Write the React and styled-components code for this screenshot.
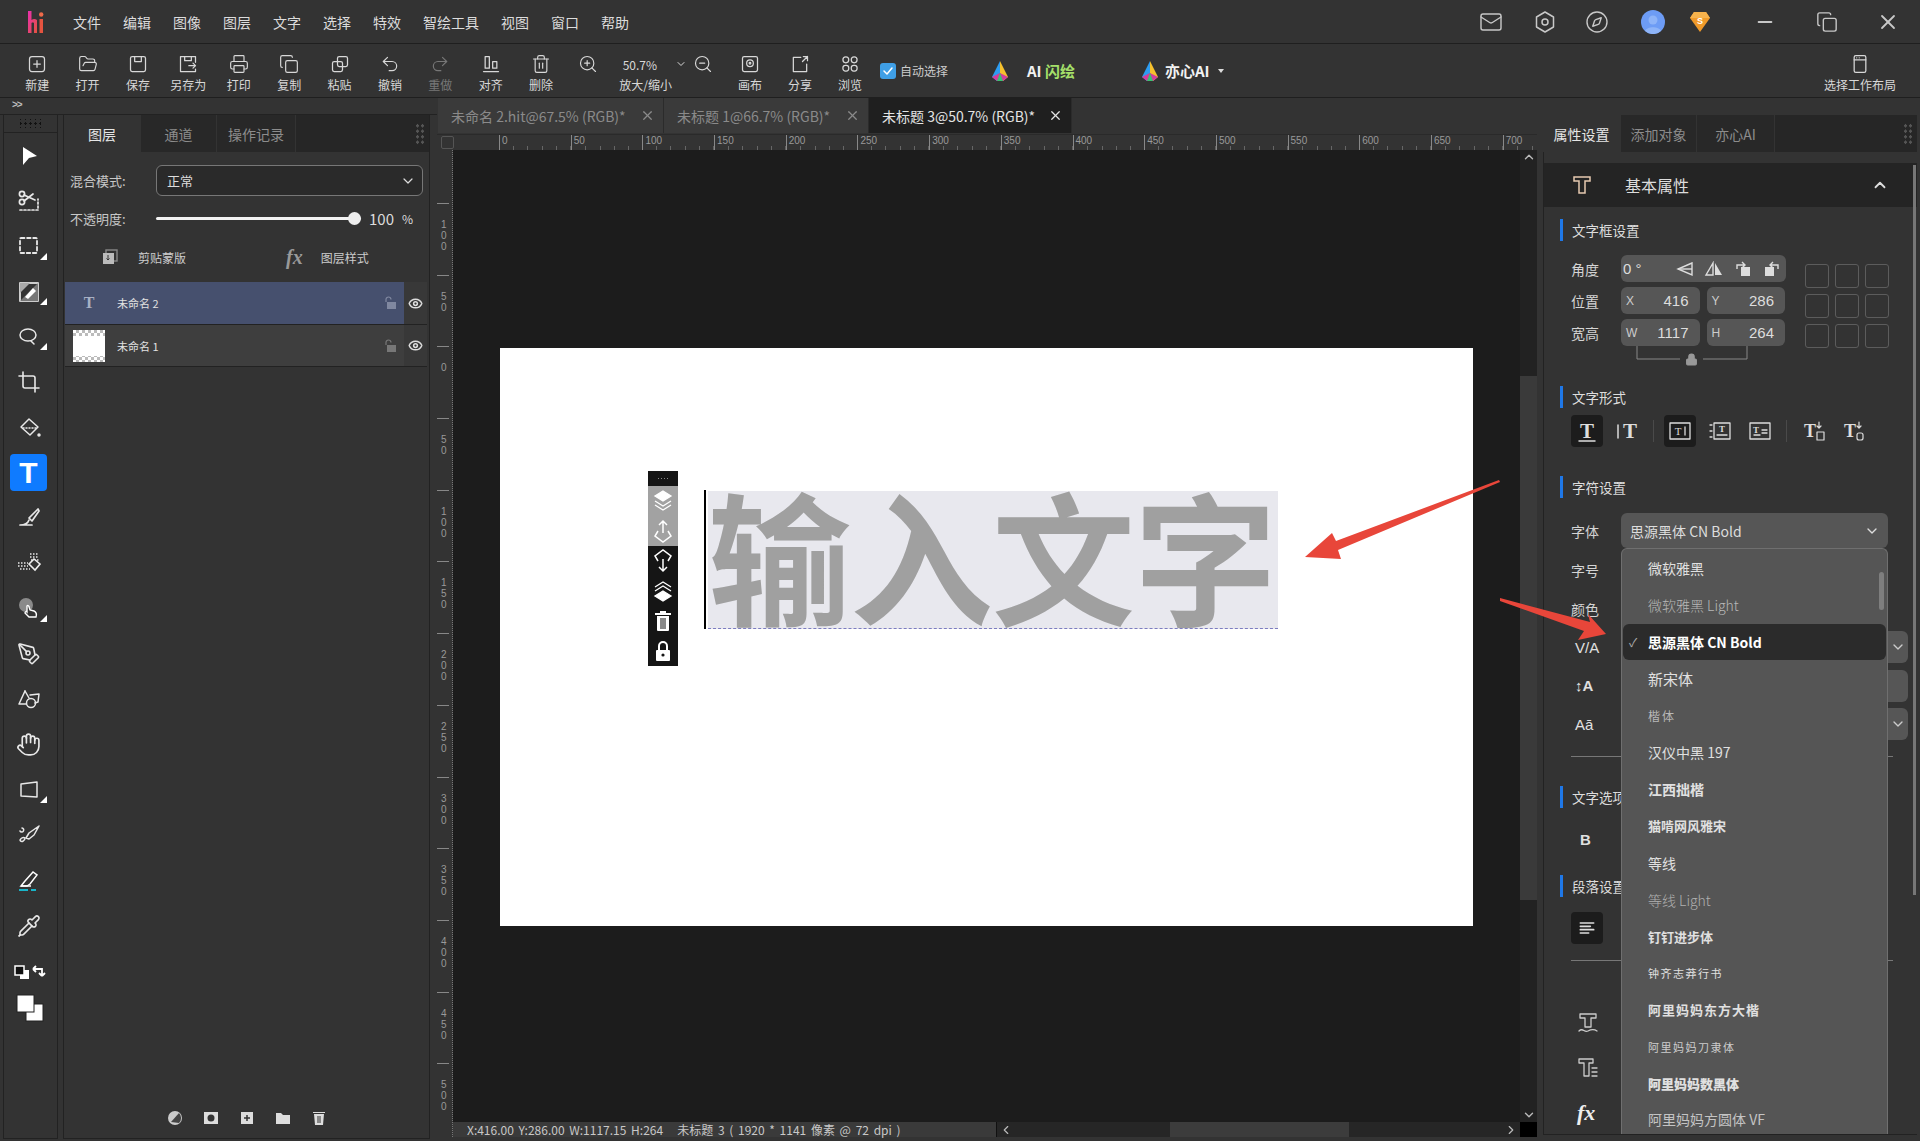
import styled, { createGlobalStyle } from "styled-components";
import {
  ChevronDown, ChevronLeft, ChevronRight, ChevronUp, Compass, Copy, Crop, Eye, FolderOpen, Hand,
  Lock, Mail, Minus, PenTool, Pipette, Printer, Redo2, Trash2, Undo2, X, ZoomIn, ZoomOut,
} from "lucide-react";

const GlobalStyle = createGlobalStyle`
  html, body { margin: 0; padding: 0; background: #333; }
  * { box-sizing: border-box; }
  body { font-family: "Noto Sans CJK SC", "Noto Sans", sans-serif; color: #ddd; }
`;

const Screen = styled.div`
  position: relative;
  width: 1920px;
  height: 1141px;
  overflow: hidden;
  background: #333;
  display: flex;
  flex-direction: column;
`;

/* ---- top bars ---- */
const MenuBar = styled.div`
  height: 44px;
  flex: none;
  display: flex;
  align-items: center;
  padding: 0 20px 0 27px;
  border-bottom: 1px solid #1f1f1f;
`;
const MenuList = styled.div`
  display: flex;
  gap: 22px;
  margin-left: 28px;
`;
const MenuItem = styled.span`
  font-size: 14px;
  color: #dcdcdc;
`;
const WindowButtons = styled.div`
  margin-left: auto;
  display: flex;
  align-items: center;
`;
const WindowSlot = styled.div`
  width: 24px;
  height: 24px;
  display: flex;
  align-items: center;
  justify-content: center;
  margin-left: ${(p) => p.$ml || 0}px;
  color: #c8c8c8;
`;
const ToolBar = styled.div`
  height: 54px;
  flex: none;
  display: flex;
  padding-left: 12px;
  border-bottom: 1px solid #1f1f1f;
`;
const ToolItem = styled.div`
  width: ${(p) => p.$w || 50.4}px;
  display: flex;
  flex-direction: column;
  align-items: center;
  padding-top: 9px;
  color: ${(p) => (p.$dim ? "#777" : "#d8d8d8")};
`;
const ToolIcon = styled.div`
  height: 22px;
  display: flex;
  align-items: center;
`;
const ToolLabel = styled.span`
  font-size: 12px;
  line-height: 16px;
  margin-top: 2px;
  white-space: nowrap;
`;
const ZoomGroup = styled.div`
  width: 158.6px;
  display: flex;
  flex-direction: column;
  align-items: center;
  padding-top: 9px;
  color: #d8d8d8;
`;
const ZoomControls = styled.div`
  width: 100%;
  height: 22px;
  display: flex;
  align-items: center;
  padding-left: 11.6px;
`;
const ZoomValue = styled.span`
  width: 60px;
  margin: 0 5px 0 12px;
  text-align: center;
  font-size: 12px;
`;
const ZoomOutIcon = styled(ZoomOut)`
  margin-left: 6px;
  flex: none;
`;
const AutoSelect = styled.div`
  display: flex;
  align-items: center;
  gap: 4px;
  margin-left: 5px;
  height: 100%;
  font-size: 12px;
  color: #ccc;
`;
const CheckBox = styled.span`
  width: 16px;
  height: 16px;
  border-radius: 3px;
  background: #3f9fe6;
  display: flex;
  align-items: center;
  justify-content: center;
  color: #fff;
`;
const AiButton = styled.div`
  display: flex;
  align-items: center;
  height: 100%;
  gap: ${(p) => p.$gap}px;
  margin-left: ${(p) => p.$ml}px;
  font-size: 15px;
  font-weight: 700;
  color: #f2f2f2;
`;
const AiAccent = styled.span`
  color: #a5e06a;
`;
const Caret = styled.span`
  width: 0;
  height: 0;
  margin-left: 4px;
  border-left: 3.5px solid transparent;
  border-right: 3.5px solid transparent;
  border-top: 4px solid #ddd;
`;
const LayoutButton = styled(ToolItem)`
  margin-left: auto;
  margin-right: 20px;
`;

/* ---- main columns ---- */
const Main = styled.div`
  flex: 1;
  display: flex;
  min-height: 0;
`;
const LeftColumn = styled.div`
  width: 437px;
  flex: none;
  display: flex;
  flex-direction: column;
`;
const CollapseStrip = styled.div`
  height: 17px;
  flex: none;
  padding-left: 12px;
  font: 700 10px/14px "Liberation Sans", sans-serif;
  letter-spacing: -1px;
  color: #bbb;
  border-bottom: 1px solid #222;
`;
const LeftBody = styled.div`
  flex: 1;
  display: flex;
  gap: 5px;
  padding: 0 7px 2px 3px;
  min-height: 0;
`;
const ToolColumn = styled.div`
  width: 55px;
  flex: none;
  border: 1px solid #222;
  border-top: none;
  display: flex;
  flex-direction: column;
  align-items: center;
`;
const DragDots = styled.div`
  width: 100%;
  height: 18px;
  flex: none;
  border-bottom: 1px solid #222;
  background-image: radial-gradient(circle, #111 1.2px, transparent 1.4px);
  background-size: 5px 5px;
  background-position: center;
  background-repeat: repeat;
  background-clip: content-box;
  padding: 4px 16px;
`;
const ToolSlot = styled.div`
  position: relative;
  width: 100%;
  height: 45.3px;
  flex: none;
  display: flex;
  align-items: center;
  justify-content: center;
  padding-right: 4px;
  color: #e8e8e8;
  ${(p) =>
    p.$corner &&
    `&::after {
      content: "";
      position: absolute;
      right: 10px;
      bottom: 9px;
      border-left: 7px solid transparent;
      border-bottom: 7px solid #fff;
    }`}
`;
const ActiveTool = styled.div`
  width: 37px;
  height: 37px;
  border-radius: 4px;
  background: #0f7bff;
  color: #fff;
  font: 700 30px/37px "Liberation Sans", sans-serif;
  text-align: center;
`;
const SwapSlot = styled.div`
  height: 28px;
  margin-top: 12px;
  padding-right: 2px;
  flex: none;
  display: flex;
  align-items: center;
`;
const ColorSlot = styled.div`
  height: 28px;
  margin-top: 6px;
  flex: none;
`;
const LayersPanel = styled.div`
  flex: 1;
  display: flex;
  flex-direction: column;
  border: 1px solid #222;
  border-top: none;
  min-width: 0;
`;
const PanelTabs = styled.div`
  height: 37px;
  flex: none;
  display: flex;
  align-items: stretch;
  background: #262626;
  position: relative;
`;
const PanelTab = styled.div`
  width: ${(p) => p.$w}px;
  display: flex;
  align-items: center;
  justify-content: center;
  font-size: 14px;
  background: ${(p) => (p.$active ? "#333" : "#282828")};
  color: ${(p) => (p.$active ? "#e6e6e6" : "#8c8c8c")};
  border-right: 1px solid #333;
`;
const Grip = styled.div`
  position: absolute;
  right: 4px;
  top: 8px;
  width: 10px;
  height: 22px;
  background-image: radial-gradient(circle, #555 1.4px, transparent 1.6px);
  background-size: 5px 5.5px;
`;
const FieldRow = styled.div`
  display: flex;
  align-items: center;
  height: ${(p) => p.$h}px;
  margin-top: ${(p) => p.$mt}px;
  padding-left: 6px;
`;
const FieldLabel = styled.span`
  width: 86px;
  flex: none;
  font-size: 13px;
  color: #c8c8c8;
`;
const BlendSelect = styled.div`
  width: 267px;
  height: 100%;
  display: flex;
  align-items: center;
  justify-content: space-between;
  padding: 0 6px 0 10px;
  background: #2a2a2a;
  border: 1px solid #777;
  border-radius: 6px;
  font-size: 13px;
  color: #ddd;
`;
const SliderTrack = styled.div`
  position: relative;
  width: 205px;
  height: 3px;
  border-radius: 2px;
  background: #f2f2f2;
`;
const SliderThumb = styled.span`
  position: absolute;
  right: 0;
  top: -5px;
  width: 13px;
  height: 13px;
  border-radius: 50%;
  background: #eee;
`;
const SliderValue = styled.span`
  margin-left: 8px;
  font-size: 15px;
  color: #ddd;
`;
const SliderUnit = styled.span`
  margin-left: 8px;
  font-size: 12px;
  color: #ddd;
`;
const ActionRow = styled.div`
  display: flex;
  align-items: center;
  height: 24px;
  margin-top: 15px;
  padding-left: 38px;
  font-size: 12px;
  color: #ccc;
`;
const ActionText = styled.span`
  margin-left: ${(p) => p.$ml}px;
`;
const FxMark = styled.span`
  margin-left: ${(p) => p.$ml ?? 100}px;
  font: italic 700 ${(p) => p.$size || 20}px "Liberation Serif", serif;
  color: ${(p) => p.$color || "#999"};
`;
const LayerList = styled.div`
  margin: 13px 2px 0 1px;
`;
const LayerRow = styled.div`
  display: flex;
  height: ${(p) => p.$h}px;
  border-bottom: 1px solid #222;
`;
const LayerMain = styled.div`
  flex: 1;
  display: flex;
  align-items: center;
  padding: 0 7px 0 8px;
  background: ${(p) => (p.$active ? "#46506e" : "#3e3e3e")};
  font-size: 11px;
  color: #e2e2e2;
`;
const LayerThumb = styled.div`
  width: 32px;
  height: 32px;
  flex: none;
  display: flex;
  align-items: center;
  justify-content: center;
  font: 700 16px "Liberation Serif", serif;
  color: #a8b0c4;
  ${(p) =>
    p.$image &&
    `background:
      linear-gradient(#fff, #fff) center / 100% 20px no-repeat,
      repeating-conic-gradient(#bbb 0 25%, #fff 0 50%) 0 0 / 6px 6px;`}
`;
const LayerName = styled.span`
  margin-left: 12px;
  flex: 1;
`;
const LayerEye = styled.div`
  width: 23px;
  display: flex;
  align-items: center;
  justify-content: center;
  background: #383838;
  color: #ddd;
`;
const LayerActions = styled.div`
  margin-top: auto;
  padding: 0 0 12px 103px;
  display: flex;
  gap: 20px;
  color: #d0d0d0;
`;

/* ---- centre ---- */
const CenterColumn = styled.div`
  width: 1103px;
  flex: none;
  display: flex;
  flex-direction: column;
  padding: 0 3px 4px 0;
`;
const DocTabs = styled.div`
  height: 37px;
  flex: none;
  display: flex;
  padding: 0 0 1px 1px;
  background: #333;
  border-bottom: 1px solid #2a2a2a;
`;
const DocTab = styled.div`
  width: ${(p) => p.$w}px;
  display: flex;
  align-items: center;
  justify-content: space-between;
  padding: 0 8px 0 13px;
  font-size: 14px;
  white-space: nowrap;
  background: ${(p) => (p.$active ? "#1f1f1f" : "#3a3a3a")};
  color: ${(p) => (p.$active ? "#e4e4e4" : "#8a8a8a")};
  border-right: 1px solid #2b2b2b;
`;
const HRuler = styled.div`
  height: 15px;
  flex: none;
  display: flex;
  overflow: hidden;
  background: #333;
`;
const RulerCorner = styled.div`
  width: 62px;
  flex: none;
  padding-left: 4px;
`;
const CornerBox = styled.div`
  width: 13px;
  height: 13px;
  margin-top: 1px;
  border: 1px solid #555;
  border-radius: 2px;
`;
const HCell = styled.div`
  width: 71.7px;
  flex: none;
  padding-left: 2px;
  border-left: 1px solid #888;
  font: 10px/12px "Liberation Sans", sans-serif;
  color: #999;
  background: repeating-linear-gradient(90deg, transparent 0 13.3px, #666 13.3px 14.3px) bottom / 100% 4px no-repeat;
`;
const Workspace = styled.div`
  flex: 1;
  display: flex;
  min-height: 0;
`;
const VRuler = styled.div`
  width: 16px;
  flex: none;
  display: flex;
  flex-direction: column;
  overflow: hidden;
  background: #333;
  border-right: 1px dotted #777;
`;
const VStub = styled.div`
  height: 53px;
  flex: none;
`;
const VCell = styled.div`
  height: 71.7px;
  flex: none;
  padding: 15px 0 0 4px;
  border-top: 1px solid #888;
  font: 10px/11px "Liberation Sans", sans-serif;
  color: #999;
  width: 12px;
  word-break: break-all;
`;
const Stage = styled.div`
  flex: 1;
  display: flex;
  flex-direction: column;
  background: #1c1c1c;
  min-width: 0;
`;
const StageRow = styled.div`
  flex: 1;
  display: flex;
  min-height: 0;
`;
const CanvasArea = styled.div`
  flex: 1;
  padding: 198px 0 0 47px;
`;
const CanvasPage = styled.div`
  position: relative;
  width: 973px;
  height: 578px;
  background: #fff;
`;
const FloatBar = styled.div`
  position: absolute;
  left: 148px;
  top: 123px;
  width: 30px;
  background: #151515;
  display: flex;
  flex-direction: column;
  align-items: center;
`;
const FloatGrip = styled.div`
  height: 15px;
  width: 100%;
  background-image: radial-gradient(circle, #888 0.8px, transparent 1px);
  background-size: 3px 3px;
  background-repeat: repeat;
  background-clip: content-box;
  padding: 5px 10px;
`;
const FloatButton = styled.div`
  width: 100%;
  height: 30px;
  display: flex;
  align-items: center;
  justify-content: center;
  background: ${(p) => (p.$muted ? "#a2a2a2" : "#151515")};
  color: #fff;
`;
const TextFrame = styled.div`
  position: absolute;
  left: 208px;
  top: 143px;
  width: 570px;
  height: 138px;
  background: #e8e8ee;
  border-bottom: 1px dashed #7c7cc0;
  font-size: 143px;
  line-height: 124px;
  font-weight: 700;
  letter-spacing: -1px;
  color: #a0a0a0;
  white-space: nowrap;
`;
const TextCaret = styled.div`
  position: absolute;
  left: 204px;
  top: 142px;
  width: 2px;
  height: 139px;
  background: #000;
`;
const VScroll = styled.div`
  width: 17px;
  flex: none;
  display: flex;
  flex-direction: column;
  align-items: center;
  background: #222;
  color: #bbb;
`;
const VThumb = styled.div`
  width: 100%;
  height: 524px;
  margin-top: 212px;
  background: #3a3a3a;
`;
const ScrollDown = styled(ChevronDown)`
  margin-top: auto;
  flex: none;
`;
const StageFoot = styled.div`
  height: 15px;
  flex: none;
  display: flex;
`;
const StatusBar = styled.div`
  width: 543px;
  flex: none;
  padding-left: 14px;
  background: #3a3a3a;
  font-size: 12px;
  line-height: 15px;
  color: #c8c8c8;
  white-space: nowrap;
  word-spacing: 2px;
`;
const HScroll = styled.div`
  flex: 1;
  position: relative;
  display: flex;
  align-items: center;
  justify-content: space-between;
  padding: 0 2px;
  background: #262626;
  border-left: 1px solid #111;
  color: #bbb;
`;
const HThumb = styled.div`
  position: absolute;
  left: 173px;
  top: 0;
  width: 179px;
  height: 100%;
  background: #3c3c3c;
`;
const ScrollCorner = styled.div`
  width: 17px;
  flex: none;
  background: #000;
`;

/* ---- right panel ---- */
const RightPanel = styled.div`
  position: relative;
  width: 380px;
  flex: none;
  display: flex;
  flex-direction: column;
  padding: 17px 3px 6px 3px;
`;
const RightBody = styled.div`
  flex: 1;
  position: relative;
  overflow: hidden;
  border-left: 1px solid #222;
  border-bottom: 1px solid #222;
`;
const BasicHeader = styled.div`
  height: 44px;
  margin-top: 11px;
  display: flex;
  align-items: center;
  padding: 0 28px 0 28px;
  background: #242424;
  font-size: 16px;
  color: #ddd;
`;
const BasicTitle = styled.span`
  margin-left: 33px;
  flex: 1;
`;
const Section = styled.div`
  height: 22px;
  margin: ${(p) => p.$mt}px 0 0 16px;
  padding-left: 9px;
  display: flex;
  align-items: center;
  border-left: 3px solid #1f78e8;
  font-size: 13.5px;
  color: #ddd;
`;
const FrameBlock = styled.div`
  display: flex;
  margin: 14px 0 0 27px;
`;
const FrameFields = styled.div`
  width: 214px;
  display: flex;
  flex-direction: column;
  gap: 5px;
`;
const FrameRow = styled.div`
  display: flex;
  align-items: center;
  gap: 7px;
  height: 27px;
`;
const RowLabel = styled.span`
  width: ${(p) => p.$w || 42}px;
  margin-right: 1px;
  flex: none;
  font-size: 14px;
  color: #d4d4d4;
`;
const Field = styled.div`
  flex: ${(p) => (p.$w ? "none" : 1)};
  width: ${(p) => p.$w || 0}px;
  height: 100%;
  display: flex;
  align-items: center;
  justify-content: space-between;
  padding: 0 ${(p) => (p.$tight ? 4 : 11)}px 0 ${(p) => (p.$tight ? 2 : 5)}px;
  background: #565656;
  border-radius: 6px;
  font: 15px "Liberation Sans", sans-serif;
  color: #ddd;
`;
const FontField = styled(Field)`
  padding: 0 8px 0 9px;
  font: 14px "Noto Sans CJK SC", "Noto Sans", sans-serif;
`;
const FieldKey = styled.span`
  font-size: 12px;
  color: #ccc;
`;
const FieldIcons = styled.span`
  display: flex;
  gap: 9px;
  color: #ddd;
`;
const AnchorGrid = styled.div`
  display: grid;
  grid-template-columns: repeat(3, 24px);
  grid-auto-rows: 24px;
  gap: 6px;
  margin: 9px 0 0 20px;
`;
const AnchorCell = styled.div`
  border: 1px solid #5c5c5c;
  border-radius: 3px;
`;
const LockLink = styled.div`
  margin: -5px 0 0 65px;
  height: 21px;
  display: flex;
`;
const FormatRow = styled.div`
  display: flex;
  align-items: center;
  gap: 8px;
  margin: ${(p) => p.$mt || 7}px 0 0 27px;
  height: 32px;
`;
const FormatButton = styled.div`
  width: 32px;
  height: 32px;
  display: flex;
  align-items: center;
  justify-content: center;
  border-radius: 4px;
  background: ${(p) => (p.$on ? "#1c1c1c" : "transparent")};
  color: #ddd;
`;
const FormatDivider = styled.div`
  width: 1px;
  height: 22px;
  margin: 0 2px;
  background: #4a4a4a;
`;
const FontRow = styled.div`
  display: flex;
  align-items: center;
  height: 35px;
  margin: 15px 24px 3px 27px;
`;
const CharRow = styled.div`
  display: flex;
  align-items: center;
  height: 38.5px;
  margin: 0 9px 0 27px;
`;
const CharMark = styled.span`
  width: 50px;
  padding-left: 4px;
  flex: none;
  color: #e0e0e0;
  font: ${(p) => (p.$bold ? 700 : 400)} 15px "Liberation Sans", sans-serif;
`;
const CharSelect = styled.div`
  flex: 1;
  height: 32px;
  display: flex;
  align-items: center;
  justify-content: flex-end;
  padding-right: 2px;
  background: #565656;
  border-radius: 6px;
  color: #ccc;
`;
const SideRule = styled.div`
  height: 1px;
  margin: ${(p) => p.$mt}px 24px 0 27px;
  background: #777;
`;
const SideIcon = styled.div`
  margin: ${(p) => p.$mt}px 0 0 32px;
  height: 24px;
  color: #ccc;
`;
const FontMenu = styled.div`
  position: absolute;
  left: 77px;
  top: 396px;
  bottom: 0;
  width: 267px;
  padding-top: 1px;
  background: #555;
  border: 1px solid #6f6f6f;
  border-bottom: none;
  border-radius: 6px 6px 0 0;
  overflow: hidden;
`;
const FontItem = styled.div`
  position: relative;
  height: 36.8px;
  display: flex;
  align-items: center;
  padding-left: 26px;
  font-size: ${(p) => p.$size || 14}px;
  font-weight: ${(p) => p.$weight || 400};
  color: ${(p) => p.$color || "#e0e0e0"};
  letter-spacing: ${(p) => p.$ls || 0}px;
  ${(p) => p.$on && "background: #2b2b2b; border-radius: 6px; color: #fff; margin: 0 1px; padding-left: 25px;"}
  &:last-child {
    height: 30px;
    align-items: flex-start;
    padding-top: 7px;
  }
`;
const CheckMark = styled.span`
  position: absolute;
  left: 6px;
  font-size: 12px;
  font-weight: 400;
  color: #aaa;
`;
const MenuThumb = styled.div`
  position: absolute;
  right: 3px;
  top: 23px;
  width: 5px;
  height: 38px;
  border-radius: 3px;
  background: #7e7e7e;
`;
const PanelThumb = styled.div`
  position: absolute;
  right: 1px;
  top: 13px;
  width: 3px;
  height: 730px;
  background: #777;
`;
const ArrowLayer = styled.svg`
  position: absolute;
  left: 0;
  top: 0;
  width: 1920px;
  height: 1141px;
  pointer-events: none;
`;

/* ---- drawn icons ---- */
const Draw = ({ s = 24, w = 1.5, vb = 24, children }) => (
  <svg width={s} height={s} viewBox={`0 0 ${vb} ${vb}`} fill="none" stroke="currentColor" strokeWidth={w} strokeLinecap="round" strokeLinejoin="round">
    {children}
  </svg>
);

const LogoH = () => (
  <svg width="18" height="24" viewBox="0 0 18 24">
    <defs>
      <linearGradient id="lg" x1="0" y1="0" x2="1" y2="1">
        <stop offset="0" stopColor="#e92fb0" />
        <stop offset="1" stopColor="#e5533f" />
      </linearGradient>
    </defs>
    <path d="M1 1h3.5v9c1.5-1 3.5-1.5 5.5 0v13H7V13c-.8-.6-1.8-.6-2.5 0v10H1z" fill="url(#lg)" />
    <rect x="12.5" y="9" width="3.5" height="14" fill="#e5533f" />
    <circle cx="14.2" cy="4.5" r="2.2" fill="#ee6a4a" />
  </svg>
);
const AiLogo = () => (
  <svg width="20" height="22" viewBox="0 0 20 22">
    <path d="M10 1 L2 17 L7 21 L10 13z" fill="#2d9cf0" />
    <path d="M10 1 L18 17 L13 21 L10 13z" fill="#f5c02c" />
    <path d="M2 17 L7 21 H13 L18 17 L10 13z" fill="#d23c9c" />
    <path d="M7 21 H13 L10 13z" fill="#38c172" />
  </svg>
);
const Gem = () => (
  <svg width="22" height="24" viewBox="0 0 22 24">
    <path d="M5 2h12l4 6-10 14L1 8z" fill="#f09a2a" />
    <path d="M5 2h12l4 6H1z" fill="#f6b24c" />
    <text x="11" y="14" textAnchor="middle" fontSize="9" fontWeight="700" fill="#fff" fontFamily="Liberation Sans">S</text>
  </svg>
);
const Avatar = () => (
  <svg width="24" height="24" viewBox="0 0 24 24">
    <circle cx="12" cy="12" r="12" fill="#6d9cf5" />
    <circle cx="12" cy="10" r="4.5" fill="#8eb4f8" />
    <path d="M4 21c2-5 14-5 16 0a12 12 0 0 1-16 0z" fill="#8eb4f8" />
  </svg>
);
const LayerLock = ({ color }) => (
  <svg width="13" height="14" viewBox="0 0 13 14">
    <path d="M2 6V3.5a2.5 2.5 0 0 1 5 0" fill="none" stroke={color} strokeWidth="1.2" />
    <rect x="3" y="6" width="9" height="7" fill={color} />
  </svg>
);

const NewIcon = () => <Draw s={20}><rect x="3" y="3" width="18" height="18" rx="3" /><path d="M12 8v8M8 12h8" /></Draw>;
const SaveIcon = () => <Draw s={20}><rect x="3" y="3" width="18" height="18" rx="2" /><path d="M8 3v6h8V3" /></Draw>;
const SaveAsIcon = () => <Draw s={20}><path d="M21 10V3H3v18h18v-3" /><path d="M8 3v5h8V3M13 14h8M18 11l3 3-3 3" /></Draw>;
const PasteIcon = () => <Draw s={20}><rect x="9" y="3" width="12" height="12" rx="2" /><rect x="3" y="9" width="12" height="12" rx="2" /></Draw>;
const AlignIcon = () => <Draw s={20}><rect x="5" y="3" width="5" height="14" /><rect x="14" y="9" width="5" height="8" /><path d="M3 21h18" /></Draw>;
const CanvasIcon = () => <Draw s={20}><rect x="3" y="3" width="18" height="18" rx="2" /><circle cx="12" cy="11" r="4" /><circle cx="12" cy="11" r="1" /></Draw>;
const ShareIcon = () => <Draw s={20}><path d="M13 4H4v17h16v-9M15 9l6-6M16 3h5v5" /></Draw>;
const BrowseIcon = () => <Draw s={20}><circle cx="7" cy="7" r="3.5" /><circle cx="17" cy="7" r="3.5" /><rect x="3.5" y="13.5" width="7" height="7" rx="3" /><rect x="13.5" y="13.5" width="7" height="7" rx="3" /></Draw>;
const LayoutIcon = () => <Draw s={20}><rect x="5" y="2" width="14" height="20" rx="2" /><path d="M5 7h14M8 4.5h.1M11 4.5h.1" /></Draw>;
const SettingsHex = () => <Draw s={24}><path d="M12 2l8.5 5v10L12 22l-8.5-5V7z" /><circle cx="12" cy="12" r="3" /></Draw>;

const TOOLS = [
  { id: "move", icon: <svg width="24" height="24" viewBox="0 0 24 24"><path d="M6 3l14 9-8 2-6 7z" fill="#fff" /></svg> },
  { id: "cut", icon: <Draw w={1.7}><circle cx="5" cy="5" r="2.6" /><circle cx="5" cy="13" r="2.6" /><path d="M7 6l11 5M7 12L16 5" /><path d="M3 21h18V10" strokeDasharray="2 2" /></Draw> },
  { id: "marquee", corner: true, icon: <Draw w={1.8}><rect x="3" y="4" width="17" height="15" rx="1" strokeDasharray="3.5 2.6" /></Draw> },
  { id: "replace", corner: true, icon: <svg width="24" height="24" viewBox="0 0 24 24"><rect x="3" y="3" width="18" height="18" fill="none" stroke="#fff" strokeWidth="1.5" /><path d="M3 21L21 3v18z" fill="#777" /><path d="M8 17l8-9 3 3-8 8z" fill="#fff" /><path d="M3 3h10L3 13z" fill="#aaa" /></svg> },
  { id: "lasso", corner: true, icon: <Draw><ellipse cx="11" cy="10" rx="8" ry="6" /><path d="M14 16l3 3" /></Draw> },
  { id: "crop", icon: <Crop size={24} strokeWidth={1.6} /> },
  { id: "fill", icon: <Draw><path d="M12 4l9 8-8 8-9-8z" /><path d="M6 13h13" strokeDasharray="1 2" /><circle cx="22" cy="20" r="1" fill="currentColor" /></Draw> },
  { id: "text", active: true },
  { id: "brush", icon: <Draw w={1.7}><path d="M12 14c-1 3-4 5-9 5h12" /><path d="M21 3l-9 9 3 3 7-10z" /></Draw> },
  { id: "erase", icon: <svg width="26" height="24" viewBox="0 0 26 24" fill="none"><path d="M2 12h10M2 15h10M4 18h10M14 3h9M14 6h9M15 9h8" stroke="#bbb" strokeWidth="2" strokeDasharray="1.5 1.5" /><path d="M13 13l5-5 6 5-5 6z" fill="#333" stroke="#eee" strokeWidth="1.6" /></svg> },
  { id: "stamp", corner: true, icon: <svg width="24" height="24" viewBox="0 0 24 24"><circle cx="9" cy="8" r="7" fill="#8a8a8a" /><path d="M10 9c1-1 2 0 2 1l1 3 4 1c2 1 3 3 2 6H12l-4-4c0-1 1-2 2-1z" fill="#333" stroke="#fff" strokeWidth="1.4" /></svg> },
  { id: "pen", icon: <PenTool size={24} strokeWidth={1.6} /> },
  { id: "shape", icon: <Draw><path d="M8 4L2 17h7" /><path d="M8 4l4 7" /><path d="M13 8l9-1-1 8-3 1" /><circle cx="14" cy="16" r="4.5" /></Draw> },
  { id: "hand", icon: <Hand size={25} strokeWidth={1.6} /> },
  { id: "warp", corner: true, icon: <Draw><path d="M4 6l16-2v15l-16-1z" /></Draw> },
  { id: "heal", icon: <Draw><path d="M22 3l-10 7-3 5 3 1 5-4z" /><path d="M5 5a2 2 0 1 1-2 3M3 17c1-2 3-3 5-2 0 3-4 5-5 2z" /></Draw> },
  { id: "marker", icon: <svg width="24" height="24" viewBox="0 0 24 24" fill="none" stroke="#fff" strokeWidth="1.5"><path d="M4 18l4-5 8-9 4 3-7 9-3 2z" /><path d="M4 18h10" /><path d="M2 22h9" stroke="#19b5c9" strokeWidth="2" /><path d="M14 22h5" stroke="#19b5c9" strokeWidth="2" /></svg> },
  { id: "dropper", icon: <Pipette size={24} strokeWidth={1.6} /> },
];

const VRULER = ["100", "50", "0", "50", "100", "150", "200", "250", "300", "350", "400", "450", "500"];
const HRULER = [0, 50, 100, 150, 200, 250, 300, 350, 400, 450, 500, 550, 600, 650, 700];

const FONTS = [
  { name: "微软雅黑" },
  { name: "微软雅黑 Light", weight: 300, color: "#b8b8b8" },
  { name: "思源黑体 CN Bold", weight: 700, on: true },
  { name: "新宋体", size: 15 },
  { name: "楷体", size: 12, color: "#b8b8b8", ls: 2 },
  { name: "汉仪中黑  197", size: 14 },
  { name: "江西拙楷", weight: 700 },
  { name: "猫啃网风雅宋", weight: 700, size: 13 },
  { name: "等线" },
  { name: "等线 Light", weight: 300, color: "#b0b0b0" },
  { name: "钉钉进步体", weight: 700, size: 13 },
  { name: "钟齐志莽行书", size: 11, ls: 1.5 },
  { name: "阿里妈妈东方大楷", weight: 700, size: 13, ls: 1 },
  { name: "阿里妈妈刀隶体", size: 11, ls: 1.5, color: "#ccc" },
  { name: "阿里妈妈数黑体", weight: 900, size: 13 },
  { name: "阿里妈妈方圆体 VF", color: "#c4c4c4" },
];

const Menu = ["文件", "编辑", "图像", "图层", "文字", "选择", "特效", "智绘工具", "视图", "窗口", "帮助"];

export default function App() {
  return (
    <Screen>
      <GlobalStyle />
      <MenuBar>
        <LogoH />
        <MenuList>
          {Menu.map((m) => <MenuItem key={m}>{m}</MenuItem>)}
        </MenuList>
        <WindowButtons>
          <WindowSlot><Mail size={24} strokeWidth={1.4} /></WindowSlot>
          <WindowSlot $ml={30}><SettingsHex /></WindowSlot>
          <WindowSlot $ml={28}><Compass size={24} strokeWidth={1.4} /></WindowSlot>
          <WindowSlot $ml={32}><Avatar /></WindowSlot>
          <WindowSlot $ml={23}><Gem /></WindowSlot>
          <WindowSlot $ml={41}><Minus size={22} strokeWidth={2} /></WindowSlot>
          <WindowSlot $ml={38}><Copy size={22} strokeWidth={1.5} /></WindowSlot>
          <WindowSlot $ml={37}><X size={24} strokeWidth={1.8} /></WindowSlot>
        </WindowButtons>
      </MenuBar>

      <ToolBar>
        <ToolItem><ToolIcon><NewIcon /></ToolIcon><ToolLabel>新建</ToolLabel></ToolItem>
        <ToolItem><ToolIcon><FolderOpen size={20} strokeWidth={1.4} /></ToolIcon><ToolLabel>打开</ToolLabel></ToolItem>
        <ToolItem><ToolIcon><SaveIcon /></ToolIcon><ToolLabel>保存</ToolLabel></ToolItem>
        <ToolItem><ToolIcon><SaveAsIcon /></ToolIcon><ToolLabel>另存为</ToolLabel></ToolItem>
        <ToolItem><ToolIcon><Printer size={20} strokeWidth={1.4} /></ToolIcon><ToolLabel>打印</ToolLabel></ToolItem>
        <ToolItem><ToolIcon><Copy size={20} strokeWidth={1.4} /></ToolIcon><ToolLabel>复制</ToolLabel></ToolItem>
        <ToolItem><ToolIcon><PasteIcon /></ToolIcon><ToolLabel>粘贴</ToolLabel></ToolItem>
        <ToolItem><ToolIcon><Undo2 size={20} strokeWidth={1.4} /></ToolIcon><ToolLabel>撤销</ToolLabel></ToolItem>
        <ToolItem $dim><ToolIcon><Redo2 size={20} strokeWidth={1.4} /></ToolIcon><ToolLabel>重做</ToolLabel></ToolItem>
        <ToolItem><ToolIcon><AlignIcon /></ToolIcon><ToolLabel>对齐</ToolLabel></ToolItem>
        <ToolItem><ToolIcon><Trash2 size={20} strokeWidth={1.4} /></ToolIcon><ToolLabel>删除</ToolLabel></ToolItem>
        <ZoomGroup>
          <ZoomControls>
            <ZoomIn size={20} strokeWidth={1.4} />
            <ZoomValue>50.7%</ZoomValue>
            <ChevronDown size={12} strokeWidth={2} />
            <ZoomOutIcon size={20} strokeWidth={1.4} />
          </ZoomControls>
          <ToolLabel>放大/缩小</ToolLabel>
        </ZoomGroup>
        <ToolItem $w={50}><ToolIcon><CanvasIcon /></ToolIcon><ToolLabel>画布</ToolLabel></ToolItem>
        <ToolItem $w={50}><ToolIcon><ShareIcon /></ToolIcon><ToolLabel>分享</ToolLabel></ToolItem>
        <ToolItem $w={50}><ToolIcon><BrowseIcon /></ToolIcon><ToolLabel>浏览</ToolLabel></ToolItem>
        <AutoSelect>
          <CheckBox>
            <Draw s={12} w={3}><path d="M4 12l6 6 10-12" /></Draw>
          </CheckBox>
          自动选择
        </AutoSelect>
        <AiButton $gap={17} $ml={42}><AiLogo /><span>AI <AiAccent>闪绘</AiAccent></span></AiButton>
        <AiButton $gap={5} $ml={65}><AiLogo /><span>亦心AI</span><Caret /></AiButton>
        <LayoutButton $w={80}><ToolIcon><LayoutIcon /></ToolIcon><ToolLabel>选择工作布局</ToolLabel></LayoutButton>
      </ToolBar>

      <Main>
        <LeftColumn>
          <CollapseStrip>&gt;&gt;</CollapseStrip>
          <LeftBody>
            <ToolColumn>
              <DragDots />
              {TOOLS.map((t) => (
                <ToolSlot key={t.id} $corner={t.corner}>
                  {t.active ? <ActiveTool>T</ActiveTool> : t.icon}
                </ToolSlot>
              ))}
              <SwapSlot>
                <svg width="32" height="20" viewBox="0 0 32 20">
                  <rect x="6" y="6" width="9" height="9" fill="#fff" />
                  <rect x="1" y="2" width="9" height="9" fill="#111" stroke="#fff" strokeWidth="1.5" />
                  <path d="M19 5h9v7M19 5l3-3M19 5l3 3M28 12l-3-3M28 12l3-3" fill="none" stroke="#fff" strokeWidth="1.8" />
                </svg>
              </SwapSlot>
              <ColorSlot>
                <svg width="30" height="28" viewBox="0 0 30 28">
                  <rect x="10" y="10" width="17" height="17" fill="#fff" stroke="#222" />
                  <rect x="1" y="1" width="17" height="17" fill="#fff" stroke="#222" />
                </svg>
              </ColorSlot>
            </ToolColumn>

            <LayersPanel>
              <PanelTabs>
                <PanelTab $w={77} $active>图层</PanelTab>
                <PanelTab $w={76}>通道</PanelTab>
                <PanelTab $w={79}>操作记录</PanelTab>
                <Grip />
              </PanelTabs>
              <FieldRow $h={31} $mt={13}>
                <FieldLabel>混合模式:</FieldLabel>
                <BlendSelect>正常<ChevronDown size={16} strokeWidth={1.8} /></BlendSelect>
              </FieldRow>
              <FieldRow $h={24} $mt={10}>
                <FieldLabel>不透明度:</FieldLabel>
                <SliderTrack><SliderThumb /></SliderTrack>
                <SliderValue>100</SliderValue>
                <SliderUnit>%</SliderUnit>
              </FieldRow>
              <ActionRow>
                <svg width="16" height="16" viewBox="0 0 16 16">
                  <rect x="4" y="1" width="11" height="11" fill="none" stroke="#888" strokeWidth="1.4" />
                  <rect x="1" y="4" width="11" height="11" fill="#bbb" />
                  <path d="M6 6v5M4.5 9.5L6 11l1.5-1.5" fill="none" stroke="#333" />
                </svg>
                <ActionText $ml={20}>剪贴蒙版</ActionText>
                <FxMark>fx</FxMark>
                <ActionText $ml={18}>图层样式</ActionText>
              </ActionRow>
              <LayerList>
                <LayerRow $h={43}>
                  <LayerMain $active>
                    <LayerThumb>T</LayerThumb>
                    <LayerName>未命名 2</LayerName>
                    <LayerLock color="#8088a0" />
                  </LayerMain>
                  <LayerEye><Eye size={15} strokeWidth={2.4} /></LayerEye>
                </LayerRow>
                <LayerRow $h={42}>
                  <LayerMain>
                    <LayerThumb $image />
                    <LayerName>未命名 1</LayerName>
                    <LayerLock color="#777" />
                  </LayerMain>
                  <LayerEye><Eye size={15} strokeWidth={2.4} /></LayerEye>
                </LayerRow>
              </LayerList>
              <LayerActions>
                <svg width="16" height="16" viewBox="0 0 16 16"><circle cx="8" cy="8" r="7" fill="#ccc" /><path d="M4 12L12 3a7 7 0 0 1 0 10z" fill="#444" /></svg>
                <svg width="16" height="16" viewBox="0 0 16 16"><rect x="1" y="2" width="14" height="12" fill="#ddd" /><circle cx="8" cy="8" r="3.5" fill="#333" /></svg>
                <svg width="16" height="16" viewBox="0 0 16 16"><rect x="2" y="2" width="12" height="12" fill="#ddd" /><path d="M8 5v6M5 8h6" stroke="#333" strokeWidth="1.5" /></svg>
                <svg width="16" height="16" viewBox="0 0 16 16"><path d="M1 3h5l2 2h7v9H1z" fill="#ddd" /></svg>
                <svg width="16" height="16" viewBox="0 0 16 16"><path d="M3 4h10l-1 11H4z M2 2h12v1H2z" fill="#ddd" /><path d="M7 6v7M9 6v7" stroke="#333" /></svg>
              </LayerActions>
            </LayersPanel>
          </LeftBody>
        </LeftColumn>

        <CenterColumn>
          <DocTabs>
            <DocTab $w={226}>未命名 2.hit@67.5% (RGB)*<X size={15} /></DocTab>
            <DocTab $w={205}>未标题 1@66.7% (RGB)*<X size={15} /></DocTab>
            <DocTab $w={203} $active>未标题 3@50.7% (RGB)*<X size={15} /></DocTab>
          </DocTabs>
          <HRuler>
            <RulerCorner><CornerBox /></RulerCorner>
            {HRULER.map((n) => <HCell key={n}>{n}</HCell>)}
          </HRuler>
          <Workspace>
            <VRuler>
              <VStub />
              {VRULER.map((n, i) => <VCell key={i}>{n}</VCell>)}
            </VRuler>
            <Stage>
              <StageRow>
                <CanvasArea>
                  <CanvasPage>
                    <FloatBar>
                      <FloatGrip />
                      <FloatButton $muted>
                        <svg width="20" height="22" viewBox="0 0 20 22" fill="none" stroke="#fff" strokeWidth="1.3"><path d="M10 1l8 5-8 5-8-5z" fill="#fff" /><path d="M2 11l8 5 8-5M2 15l8 5 8-5" /></svg>
                      </FloatButton>
                      <FloatButton $muted>
                        <svg width="20" height="24" viewBox="0 0 20 24" fill="none" stroke="#fff" strokeWidth="1.5"><path d="M10 14V2M6 6l4-4 4 4" /><path d="M5 12l-3 5 8 6 8-6-3-5" /></svg>
                      </FloatButton>
                      <FloatButton>
                        <svg width="20" height="24" viewBox="0 0 20 24" fill="none" stroke="#fff" strokeWidth="1.5"><path d="M10 10v12M6 18l4 4 4-4" /><path d="M5 12L2 7l8-6 8 6-3 5" /></svg>
                      </FloatButton>
                      <FloatButton>
                        <svg width="20" height="22" viewBox="0 0 20 22" fill="none" stroke="#fff" strokeWidth="1.3"><path d="M2 7l8-5 8 5M2 11l8-5 8 5" /><path d="M10 11l8 5-8 5-8-5z" fill="#fff" /></svg>
                      </FloatButton>
                      <FloatButton>
                        <svg width="18" height="22" viewBox="0 0 18 22"><path d="M6 1h6v2h5v2H1V3h5z" fill="#fff" /><path d="M3 6h12v14a1 1 0 0 1-1 1H4a1 1 0 0 1-1-1z" fill="#fff" /><path d="M7 8v11M9 8v11M11 8v11" stroke="#151515" /></svg>
                      </FloatButton>
                      <FloatButton>
                        <svg width="18" height="22" viewBox="0 0 18 22"><path d="M5 10V6a4 4 0 0 1 8 0v4" fill="none" stroke="#fff" strokeWidth="2" /><rect x="2" y="10" width="14" height="11" fill="#fff" rx="1" /><circle cx="9" cy="15" r="1.6" fill="#151515" /></svg>
                      </FloatButton>
                    </FloatBar>
                    <TextCaret />
                    <TextFrame>输入文字</TextFrame>
                  </CanvasPage>
                </CanvasArea>
                <VScroll>
                  <ChevronUp size={14} strokeWidth={2.4} />
                  <VThumb />
                  <ScrollDown size={14} strokeWidth={2.4} />
                </VScroll>
              </StageRow>
              <StageFoot>
                <StatusBar>X:416.00 Y:286.00 W:1117.15 H:264 &nbsp; 未标题 3 ( 1920 * 1141 像素 @ 72 dpi )</StatusBar>
                <HScroll>
                  <HThumb />
                  <ChevronLeft size={14} strokeWidth={2} />
                  <ChevronRight size={14} strokeWidth={2} />
                </HScroll>
                <ScrollCorner />
              </StageFoot>
            </Stage>
          </Workspace>
        </CenterColumn>

        <RightPanel>
          <PanelTabs>
            <PanelTab $w={78} $active>属性设置</PanelTab>
            <PanelTab $w={76}>添加对象</PanelTab>
            <PanelTab $w={78}>亦心AI</PanelTab>
            <Grip />
          </PanelTabs>
          <RightBody>
            <BasicHeader>
              <svg width="20" height="20" viewBox="0 0 20 20" fill="none" stroke="#e6c9b0" strokeWidth="1.5"><path d="M2 2h16v4h-5v12H7V6H2z" /></svg>
              <BasicTitle>基本属性</BasicTitle>
              <ChevronUp size={18} strokeWidth={2.4} />
            </BasicHeader>
            <Section $mt={12}>文字框设置</Section>
            <FrameBlock>
              <FrameFields>
                <FrameRow>
                  <RowLabel>角度</RowLabel>
                  <Field $w={165} $tight>
                    <span>0 °</span>
                    <FieldIcons>
                      <svg width="20" height="16" viewBox="0 0 20 16" fill="none" stroke="#ddd" strokeWidth="1.4"><path d="M17 2L3 8l14 6z" /><path d="M3 8h14" /></svg>
                      <svg width="20" height="16" viewBox="0 0 20 16"><path d="M9 2L2 14h7z" fill="none" stroke="#ddd" strokeWidth="1.4" /><path d="M11 2l7 12h-7z" fill="#ddd" /></svg>
                      <svg width="20" height="16" viewBox="0 0 20 16"><rect x="8" y="6" width="9" height="9" fill="#ddd" /><path d="M4 8V4h8M9 1l3 3-3 3" fill="none" stroke="#ddd" strokeWidth="1.4" /></svg>
                      <svg width="20" height="16" viewBox="0 0 20 16"><rect x="3" y="6" width="9" height="9" fill="#ddd" /><path d="M16 8V4H8M11 1L8 4l3 3" fill="none" stroke="#ddd" strokeWidth="1.4" /></svg>
                    </FieldIcons>
                  </Field>
                </FrameRow>
                <FrameRow>
                  <RowLabel>位置</RowLabel>
                  <Field><FieldKey>X</FieldKey>416</Field>
                  <Field><FieldKey>Y</FieldKey>286</Field>
                </FrameRow>
                <FrameRow>
                  <RowLabel>宽高</RowLabel>
                  <Field><FieldKey>W</FieldKey>1117</Field>
                  <Field><FieldKey>H</FieldKey>264</Field>
                </FrameRow>
                <LockLink>
                  <svg width="112" height="21" viewBox="0 0 112 21" fill="none" stroke="#888"><path d="M1 0v13h43M67 13h44V0" /><Lock x="49" y="7" width="13" height="13" stroke="#999" fill="#999" /></svg>
                </LockLink>
              </FrameFields>
              <AnchorGrid>
                {Array.from({ length: 9 }, (_, i) => <AnchorCell key={i} />)}
              </AnchorGrid>
            </FrameBlock>

            <Section $mt={19}>文字形式</Section>
            <FormatRow>
              <FormatButton $on><Draw s={24} w={0}><text x="12" y="19" textAnchor="middle" fontSize="21" fontWeight="700" fill="#ddd" stroke="none" fontFamily="Liberation Serif">T</text><path d="M4 22h16" stroke="#ddd" strokeWidth="1.5" /></Draw></FormatButton>
              <FormatButton><Draw s={24} w={0}><text x="15" y="19" textAnchor="middle" fontSize="21" fontWeight="700" fill="#ddd" stroke="none" fontFamily="Liberation Serif">T</text><path d="M3 6v13" stroke="#ddd" strokeWidth="1.5" /></Draw></FormatButton>
              <FormatDivider />
              <FormatButton $on><Draw s={24} w={1.3}><rect x="2" y="4" width="20" height="16" /><text x="10" y="16" textAnchor="middle" fontSize="11" fill="#ddd" stroke="none" fontFamily="Liberation Serif">T</text><path d="M17 8v8" /></Draw></FormatButton>
              <FormatButton><Draw s={24} w={1.3}><rect x="6" y="4" width="16" height="16" /><text x="14" y="13" textAnchor="middle" fontSize="9" fontWeight="700" fill="#ddd" stroke="none" fontFamily="Liberation Serif">T</text><path d="M9 16h10M2 6h2M2 12h2M2 18h2" /></Draw></FormatButton>
              <FormatButton><Draw s={24} w={1.3}><rect x="2" y="4" width="20" height="16" /><text x="8" y="14" textAnchor="middle" fontSize="9" fontWeight="700" fill="#ddd" stroke="none" fontFamily="Liberation Serif">T</text><path d="M6 16h6M14 11h5M14 14h5" /></Draw></FormatButton>
              <FormatDivider />
              <FormatButton><Draw s={24} w={1.2}><text x="9" y="18" textAnchor="middle" fontSize="18" fontWeight="700" fill="#ddd" stroke="none" fontFamily="Liberation Serif">T</text><rect x="16" y="13" width="7" height="8" /><path d="M18 3v6M16 7l2 2 2-2" /></Draw></FormatButton>
              <FormatButton><Draw s={24} w={1.2}><text x="9" y="18" textAnchor="middle" fontSize="18" fontWeight="700" fill="#ddd" stroke="none" fontFamily="Liberation Serif">T</text><rect x="16" y="14" width="6" height="7" rx="2" /><path d="M18 3v6M16 7l2 2 2-2" /></Draw></FormatButton>
            </FormatRow>

            <Section $mt={29}>字符设置</Section>
            <FontRow>
              <RowLabel $w={49}>字体</RowLabel>
              <FontField $w={267}>思源黑体 CN Bold<ChevronDown size={16} /></FontField>
            </FontRow>
            <CharRow><RowLabel>字号</RowLabel></CharRow>
            <CharRow><RowLabel>颜色</RowLabel></CharRow>
            <CharRow><CharMark>V/A</CharMark><CharSelect><ChevronDown size={16} /></CharSelect></CharRow>
            <CharRow><CharMark $bold>↕A</CharMark><CharSelect /></CharRow>
            <CharRow><CharMark>Aā</CharMark><CharSelect><ChevronDown size={16} /></CharSelect></CharRow>
            <SideRule $mt={12} />
            <Section $mt={29}>文字选项</Section>
            <SideIcon $mt={18}><CharMark $bold>B</CharMark></SideIcon>
            <Section $mt={25}>段落设置</Section>
            <FormatRow $mt={15}><FormatButton $on><Draw s={20} w={2}><path d="M4 6h16M4 10h12M4 14h16M4 18h10" /></Draw></FormatButton></FormatRow>
            <SideRule $mt={16} />
            <SideIcon $mt={50}><Draw s={24} w={1.3}><path d="M4 3h16v4h-5v9H9V7H4zM3 20c4-4 5 2 9 0s6-2 9 0" /></Draw></SideIcon>
            <SideIcon $mt={21}><Draw s={24} w={1.3}><path d="M3 3h14v4h-4v13H8V7H3zM16 12h5M16 16h5M16 20h5" /></Draw></SideIcon>
            <SideIcon $mt={20}><FxMark $ml={1} $size={22} $color="#eee">fx</FxMark></SideIcon>

            <PanelThumb />
            <FontMenu>
              <MenuThumb />
              {FONTS.map((f) => (
                <FontItem key={f.name} $weight={f.weight} $size={f.size} $color={f.color} $ls={f.ls} $on={f.on}>
                  {f.on && <CheckMark>✓</CheckMark>}
                  {f.name}
                </FontItem>
              ))}
            </FontMenu>
          </RightBody>
        </RightPanel>
      </Main>

      <ArrowLayer viewBox="0 0 1920 1141">
        <path d="M1499 480L1336 541l-4-8-27 24 36 2-3-9L1500 482z" fill="#e8463a" />
        <path d="M1500 598l90 24-2-8 18 20-28 6 6-9-84-30z" fill="#e8463a" />
      </ArrowLayer>
    </Screen>
  );
}
